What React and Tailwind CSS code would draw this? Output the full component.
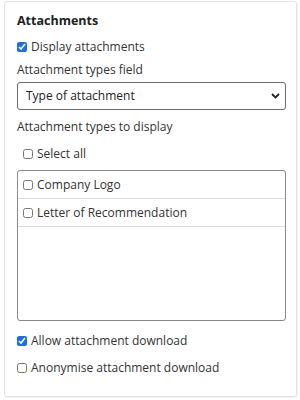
export default function App() {
  const items = ["Company Logo", "Letter of Recommendation"];
  const box = "m-0 h-[10px] w-[10px] shrink-0";
  return (
    <div
      className="h-[400px] w-[300px] bg-white pt-px text-[12px] text-[#333]"
      style={{ fontFamily: '"Open Sans", sans-serif' }}
    >
      <div className="ml-[4px] mr-[3px] h-[396px] rounded-[3px] border border-[#e2e2e2] pl-[12px] pr-[10px] pt-[11px] shadow-[1px_1px_1px_rgba(0,0,0,0.06)]">
        <h2 className="text-[12.5px] font-bold leading-[16px] text-[#222]">Attachments</h2>

        <label className="mt-[10px] flex items-center gap-[4px] leading-[16px]">
          <input type="checkbox" defaultChecked className={`${box} accent-[#1b6fe2]`} />
          <span>Display attachments</span>
        </label>

        <div className="mt-[7px] leading-[16px]">Attachment types field</div>

        <div className="relative mt-[4px]">
          <select className="h-[28px] w-full appearance-none rounded-[3px] border border-[#6b6b6b] bg-white pl-[8px] text-[12px] text-[#222] outline-none">
            <option>Type of attachment</option>
          </select>
          <svg
            className="pointer-events-none absolute right-[6px] top-[11px]"
            width="9"
            height="6"
            viewBox="0 0 9 6"
          >
            <path d="M1 1l3.5 3.5L8 1" fill="none" stroke="#222" strokeWidth="1.8" />
          </svg>
        </div>

        <div className="mt-[9px] leading-[16px]">Attachment types to display</div>

        <label className="mt-[11px] flex items-center gap-[4px] pl-[6px] leading-[16px]">
          <input type="checkbox" className={box} />
          <span>Select all</span>
        </label>

        <div className="mt-[8px] h-[151px] rounded-[3px] border border-[#8a8a8a]">
          {items.map((t) => (
            <label
              key={t}
              className="flex h-[28px] items-center gap-[4px] border-b border-[#dcdcdc] pl-[5px]"
            >
              <input type="checkbox" className={box} />
              <span>{t}</span>
            </label>
          ))}
        </div>

        <label className="mt-[12px] flex items-center gap-[4px] leading-[16px]">
          <input type="checkbox" defaultChecked className={`${box} accent-[#1b6fe2]`} />
          <span>Allow attachment download</span>
        </label>

        <label className="mt-[11px] flex items-center gap-[4px] leading-[16px]">
          <input type="checkbox" className={box} />
          <span>Anonymise attachment download</span>
        </label>
      </div>
    </div>
  );
}
